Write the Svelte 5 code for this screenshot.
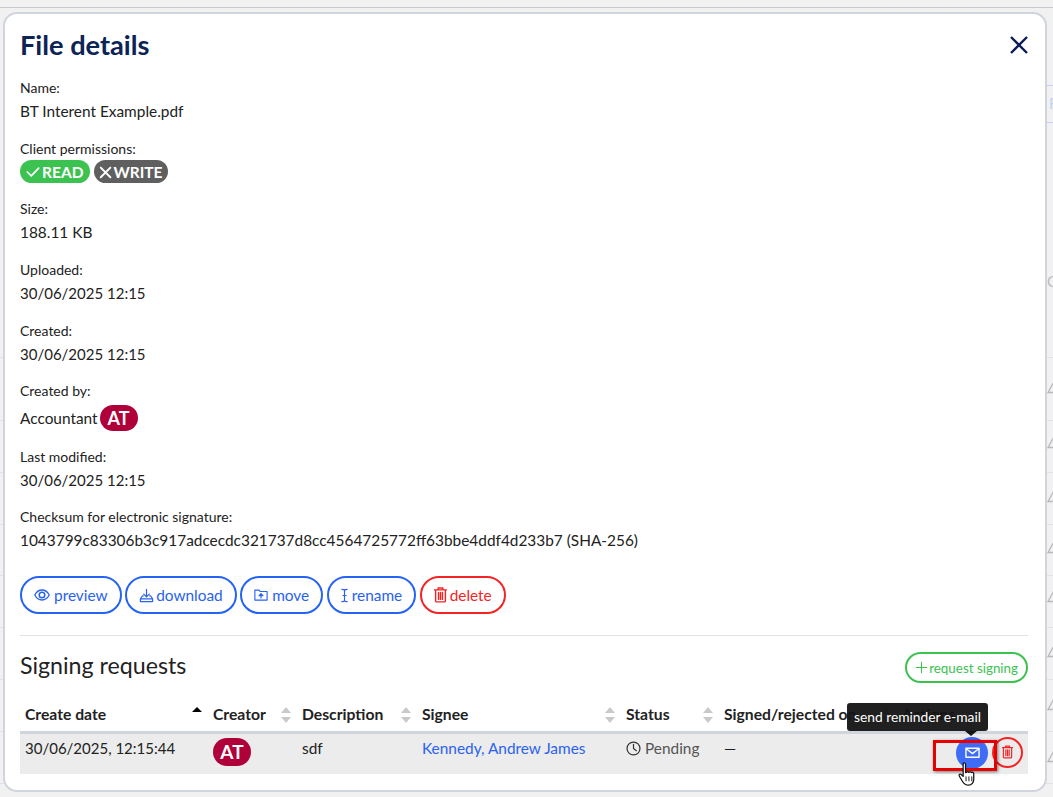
<script>
  const details = [
    { label: 'Name:', value: 'BT Interent Example.pdf' },
    { label: 'Client permissions:', badges: true },
    { label: 'Size:', value: '188.11 KB' },
    { label: 'Uploaded:', value: '30/06/2025 12:15', date: true },
    { label: 'Created:', value: '30/06/2025 12:15', date: true, tight: true },
    { label: 'Created by:', value: 'Accountant', avatar: true },
    { label: 'Last modified:', value: '30/06/2025 12:15', date: true, tight: true },
    { label: 'Checksum for electronic signature:', value: '1043799c83306b3c917adcecdc321737d8cc4564725772ff63bbe4ddf4d233b7 (SHA-256)' }
  ]

  const actions = [
    { name: 'preview', icon: 'eye' },
    { name: 'download', icon: 'download' },
    { name: 'move', icon: 'folder' },
    { name: 'rename', icon: 'cursor' },
    { name: 'delete', icon: 'trash', danger: true }
  ]

  const columns = [
    { name: 'Create date', width: 188, active: true },
    { name: 'Creator', width: 89 },
    { name: 'Description', width: 120 },
    { name: 'Signee', width: 204 },
    { name: 'Status', width: 98 },
    { name: 'Signed/rejected on', width: 178 },
    { name: 'Actions', width: 131, plain: true }
  ]

  // the page behind the modal only peeks out at the edges
  const behindLines = [357, 420, 472, 524, 575, 627, 679, 731, 783]
  const behindWarnings = [388, 443, 497, 548, 597, 652, 705, 757]

  const viewBoxes = { cursor: '4 0.5 8 15', trash: '2 1 12 14.500' }
</script>

{#snippet icon(name)}
  <svg class="icon {name}" viewBox={viewBoxes[name] ?? '0 0 16 16'} fill="none" stroke="currentColor" stroke-width="1.3" stroke-linecap="round" stroke-linejoin="round">
    {#if name === 'eye'}
      <path d="M.8 8c1.700-3.300 4.100-5 7.200-5s5.500 1.700 7.200 5c-1.700 3.300-4.100 5-7.200 5S2.500 11.300.8 8z" />
      <circle cx="8" cy="8" r="2.800" stroke-width="1.500" />
    {:else if name === 'download'}
      <path d="M8 1.500v8M5 6.500l3 3 3-3M4.500 8.500h-1l-2 3v3h13v-3l-2-3h-1M1.500 11.500h13" />
    {:else if name === 'folder'}
      <path d="M1 2.500h4.800L7 4h8v9.800H1zM8 11.500V7.500" />
      <path d="M5.800 8.800 8 6.500l2.200 2.300z" fill="currentColor" />
    {:else if name === 'cursor'}
      <path d="M5 1c1.800 0 3 .6 3 2v10c0 1.400-1.200 2-3 2M11 1C9.200 1 8 1.600 8 3v10c0 1.400 1.200 2 3 2M6.200 8h3.600" />
    {:else if name === 'trash'}
      <path d="M2.500 3.500h11M5.800 3.500V1.800h4.400v1.700M3.500 3.500v10.300c0 .5.300.8.800.8h7.400c.5 0 .8-.3.800-.8V3.500M6.200 6v6.300M8 6v6.300M9.800 6v6.300" />
    {:else if name === 'mail'}
      <path d="M1 3.500h14v9.500H1zM1.400 4 8 9.200 14.600 4" stroke-width="1.500" />
    {:else if name === 'clock'}
      <circle cx="8" cy="8" r="6.900" />
      <path d="M8 3.500V8l3 2.300" />
    {:else if name === 'plus'}
      <path d="M8 1.500v13M1.500 8h13" />
    {:else if name === 'check'}
      <path d="M1.500 8 6 12.500 14.500 3.500" stroke-width="1.900" />
    {:else if name === 'cross'}
      <path d="M2 3l11 11M13 3 2 14" stroke-width="2.200" />
    {/if}
  </svg>
{/snippet}

<div class="page">
  <div class="behind">
    {#each behindLines as y}
      <div class="behind-line" style="top: {y}px"></div>
    {/each}
    {#each behindWarnings as y}
      <svg class="behind-warning" style="top: {y - 6}px" viewBox="0 0 12 12" fill="none" stroke="#b9b9b9" stroke-width="1.300"><path d="M6 1.500 1 10.500h10z" /></svg>
    {/each}
    <div class="behind-tab">F</div>
    <div class="behind-c">C</div>
  </div>

  <div class="topbar"></div>
  <div class="modal">
    <header>
      <h1>File details</h1>
      <button class="close" aria-label="close">
        <svg viewBox="0 0 20 20" fill="none" stroke="currentColor" stroke-width="2.400"><path d="M2 2l16 16M18 2 2 18" /></svg>
      </button>
    </header>

    <div class="details">
      {#each details as d}
        <div class="detail" class:tight={d.tight}>
          <div class="label">{d.label}</div>
          {#if d.badges}
            <div class="badges">
              <span class="badge read">{@render icon('check')}READ</span>
              <span class="badge write">{@render icon('cross')}WRITE</span>
            </div>
          {:else}
            <div class="value" class:date={d.date} class:with-avatar={d.avatar}>{d.value}{#if d.avatar}<span class="avatar">AT</span>{/if}</div>
          {/if}
        </div>
      {/each}
    </div>

    <div class="actions">
      {#each actions as a}
        <button class="pill" class:danger={a.danger}>{@render icon(a.icon)}{a.name}</button>
      {/each}
    </div>

    <div class="signing">
      <div class="signing-head">
        <h2>Signing requests</h2>
        <button class="request">{@render icon('plus')}request signing</button>
      </div>

      <table>
        <thead>
          <tr>
            {#each columns as c}
              <th style="width: {c.width}px">
                <span class="th-name">{c.name}</span>
                {#if !c.plain}<span class="sort" class:active={c.active}></span>{/if}
              </th>
            {/each}
          </tr>
        </thead>
        <tbody>
          <tr>
            <td class="date">30/06/2025, 12:15:44</td>
            <td><span class="avatar in-table">AT</span></td>
            <td>sdf</td>
            <td><a href="#signee">Kennedy, Andrew James</a></td>
            <td class="status">{@render icon('clock')}Pending</td>
            <td>—</td>
            <td class="row-actions">
              <div class="row-buttons">
                <span class="tooltip-anchor">
                  <span class="tooltip">send reminder e-mail</span>
                  <button class="round mail-btn" aria-label="send reminder e-mail">{@render icon('mail')}</button>
                  <span class="highlight"></span>
                  <svg class="hand" viewBox="0 0 20 28">
                    <path d="M6 2.500c1-1 2.500-.5 2.500 1V12l1-.2c.5-1 2-1 2.500 0 .6-.8 2-.8 2.500.2.700-.6 2.200-.4 2.500 1v6c0 3-2 6-5.500 6-3 0-4.500-1-6-3.500L2 15.500c-.7-1.500 1-2.600 2-1.500l2 2V3.500z" fill="#fff" stroke="#111" stroke-width="1.300" stroke-linejoin="round" />
                    <path d="M9 16v5M12 16v5M15 16v5" stroke="#111" stroke-width="1" fill="none" />
                  </svg>
                </span>
                <button class="round trash-btn" aria-label="delete">{@render icon('trash')}</button>
              </div>
            </td>
          </tr>
        </tbody>
      </table>
    </div>
  </div>
</div>

<style>
  :global(body) {
    margin: 0;
    background: #f1f1f1;
    font-family: Lato, sans-serif;
    color: #222;
  }

  .page {
    position: relative;
    height: 797px;
    overflow: hidden;
    padding: 0 6px 0 3px;
    box-sizing: border-box;
  }

  .behind-line {
    position: absolute;
    left: 0;
    right: 0;
    height: 1px;
    background: #e2e2e2;
  }

  .behind-warning {
    position: absolute;
    left: 1047px;
    width: 12px;
    height: 12px;
  }

  .behind-tab {
    position: absolute;
    left: 1047px;
    top: 85px;
    width: 20px;
    height: 36px;
    padding-left: 2px;
    border-top: 1px solid #c6d0f2;
    border-bottom: 1px solid #c6d0f2;
    color: #c6d0f2;
    font-size: 15px;
    line-height: 35px;
  }

  .behind-c {
    position: absolute;
    left: 1047px;
    top: 271px;
    color: #bdbdbd;
    font-size: 15px;
    line-height: 20px;
  }

  .topbar {
    height: 7px;
    border-bottom: 1px solid #c9c9cf;
    margin: 0 -6px 4px -3px;
  }

  .modal {
    position: relative;
    height: 780px;
    box-sizing: border-box;
    background: #fff;
    border: 2px solid #d0d5dd;
    border-radius: 14px;
    padding: 0 17px 0 15px;
  }

  header {
    display: flex;
    justify-content: space-between;
    align-items: center;
    height: 63px;
  }

  h1 {
    margin: -2px 0 0;
    font-size: 27.200px;
    font-weight: 700;
    color: #0c2356;
  }

  .close {
    width: 20px;
    height: 20px;
    padding: 0;
    margin: -2px -1px 0 0;
    border: 0;
    background: none;
    color: #0b1c56;
  }

  .close svg {
    display: block;
  }

  .details {
    display: flex;
    flex-direction: column;
  }

  .detail {
    margin-bottom: 13px;
  }

  .detail.tight {
    margin-bottom: 12px;
  }

  .detail:has(.badges) {
    margin-bottom: 0;
  }

  .label {
    font-size: 14px;
    line-height: 21px;
  }

  .value {
    display: flex;
    align-items: center;
    padding-bottom: 1px;
    font-size: 15.400px;
    line-height: 26px;
  }

  .value.date,
  td.date {
    font-size: 15px;
  }

  .value.with-avatar {
    height: 32px;
    box-sizing: border-box;
    padding: 1px 0 0;
  }

  .badges {
    display: flex;
    gap: 4px;
    margin: 1px 0 15px;
  }

  .badge {
    display: inline-flex;
    align-items: center;
    gap: 2px;
    height: 23px;
    padding: 0 6px;
    border-radius: 12px;
    font-size: 15.500px;
    font-weight: 700;
    color: #fff;
  }

  .badge .icon {
    width: 14px;
    height: 14px;
  }

  .read {
    padding-right: 7px;
    background: #3cc251;
  }

  .write {
    gap: 0;
    padding: 0 5.500px 0 5px;
    background: #5f5f5f;
  }

  .avatar {
    display: inline-flex;
    align-items: center;
    justify-content: center;
    width: 38px;
    height: 26px;
    margin-left: 2px;
    border-radius: 13px;
    background: #b0003a;
    color: #fff;
    font-size: 18px;
    font-weight: 700;
  }

  .avatar.in-table {
    height: 28px;
    margin: -1px 0 0;
    border-radius: 14px;
    font-size: 19px;
  }

  .actions {
    display: flex;
    gap: 3.500px;
    margin-top: 9px;
    padding-bottom: 21px;
    border-bottom: 1px solid #e3e3e3;
  }

  .pill {
    display: inline-flex;
    align-items: center;
    gap: 4px;
    height: 38px;
    padding: 0 12px;
    border: 2px solid #2563f5;
    border-radius: 19px;
    background: #fff;
    color: #2a62f0;
    font: 15.400px Lato, sans-serif;
  }

  .pill .icon {
    width: 16px;
    height: 16px;
  }

  .pill .icon.download {
    width: 15px;
    height: 15px;
    margin-right: -2px;
  }

  .pill .icon.folder {
    width: 14px;
    height: 14px;
  }

  .pill .icon.cursor {
    width: 7px;
    height: 17px;
  }

  .pill .icon.trash {
    width: 13px;
    height: 16px;
    margin-right: -1px;
  }

  .pill.danger {
    border-color: #f52424;
    color: #f52424;
  }

  .signing-head {
    display: flex;
    align-items: center;
    justify-content: space-between;
    padding-top: 16px;
  }

  h2 {
    margin: -5px 0 0;
    font-size: 23.200px;
    font-weight: 400;
    color: #222;
  }

  .request {
    display: inline-flex;
    align-items: center;
    gap: 1px;
    height: 31px;
    padding: 0 8px;
    border: 2px solid #3cc251;
    border-radius: 16px;
    background: #fff;
    color: #3cc251;
    font: 13.400px Lato, sans-serif;
  }

  .request .icon {
    width: 13px;
    height: 13px;
  }

  table {
    border-collapse: collapse;
    table-layout: fixed;
    width: 1008px;
    margin-top: 14px;
    font-size: 15.400px;
  }

  th {
    position: relative;
    box-sizing: border-box;
    height: 35px;
    padding: 0 0 0 5px;
    text-align: left;
    font-size: 15.700px;
    font-weight: 700;
    color: #222;
    border-bottom: 3px solid #d0d5dd;
    white-space: nowrap;
  }

  .sort {
    position: absolute;
    right: 6px;
    top: 10px;
    width: 10px;
    height: 16px;
  }

  .sort::before,
  .sort::after {
    content: '';
    position: absolute;
    left: 0;
    border-left: 5px solid transparent;
    border-right: 5px solid transparent;
  }

  .sort::before {
    top: 0;
    border-bottom: 6px solid #c9c9c9;
  }

  .sort::after {
    bottom: 0;
    border-top: 6px solid #c9c9c9;
  }

  .sort.active::before {
    border-bottom-color: #000;
    border-bottom-width: 5px;
  }

  .sort.active::after {
    display: none;
  }

  tbody tr {
    background: #ececec;
  }

  td {
    height: 42px;
    padding: 5px 0 0 5px;
    box-sizing: border-box;
    vertical-align: top;
    white-space: nowrap;
  }

  a {
    color: #2a62f0;
    text-decoration: none;
  }

  .status {
    color: #555;
  }

  .status .icon {
    width: 15px;
    height: 15px;
    margin-right: 4px;
    vertical-align: -2px;
    color: #333;
  }

  .row-actions {
    padding: 3px 5px 0 0;
  }

  .row-buttons {
    display: flex;
    justify-content: flex-end;
    gap: 4px;
  }

  .tooltip-anchor {
    position: relative;
    display: block;
    width: 32px;
    height: 32px;
  }

  .round {
    display: flex;
    align-items: center;
    justify-content: center;
    width: 32px;
    height: 32px;
    padding: 0;
    border-radius: 50%;
    box-sizing: border-box;
  }

  .round .icon {
    width: 15px;
    height: 15px;
  }

  .round .icon.trash {
    width: 11px;
    height: 14px;
  }

  .mail-btn {
    background: #3e6cf6;
    border: 0;
    color: #fff;
  }

  .trash-btn {
    width: 31px;
    height: 31px;
    background: transparent;
    border: 2px solid #f52424;
    color: #f52424;
  }

  .tooltip {
    position: absolute;
    right: 0;
    bottom: calc(100% + 6px);
    height: 28px;
    padding: 0 7px;
    display: flex;
    align-items: center;
    background: rgba(20, 20, 20, 0.95);
    border-radius: 3px;
    color: #fff;
    font-size: 13.800px;
    white-space: nowrap;
  }

  .tooltip::after {
    content: '';
    position: absolute;
    right: 11px;
    bottom: -5px;
    border-left: 6px solid transparent;
    border-right: 6px solid transparent;
    border-top: 5px solid #141414;
  }

  .highlight {
    position: absolute;
    left: -23px;
    top: 3px;
    width: 64px;
    height: 31px;
    box-sizing: border-box;
    border: 3px solid #e60000;
    box-shadow: 1px 1px 3px rgba(0, 0, 0, 0.5);
  }

  .hand {
    position: absolute;
    left: 1px;
    top: 24px;
    width: 20px;
    height: 27px;
  }
</style>
